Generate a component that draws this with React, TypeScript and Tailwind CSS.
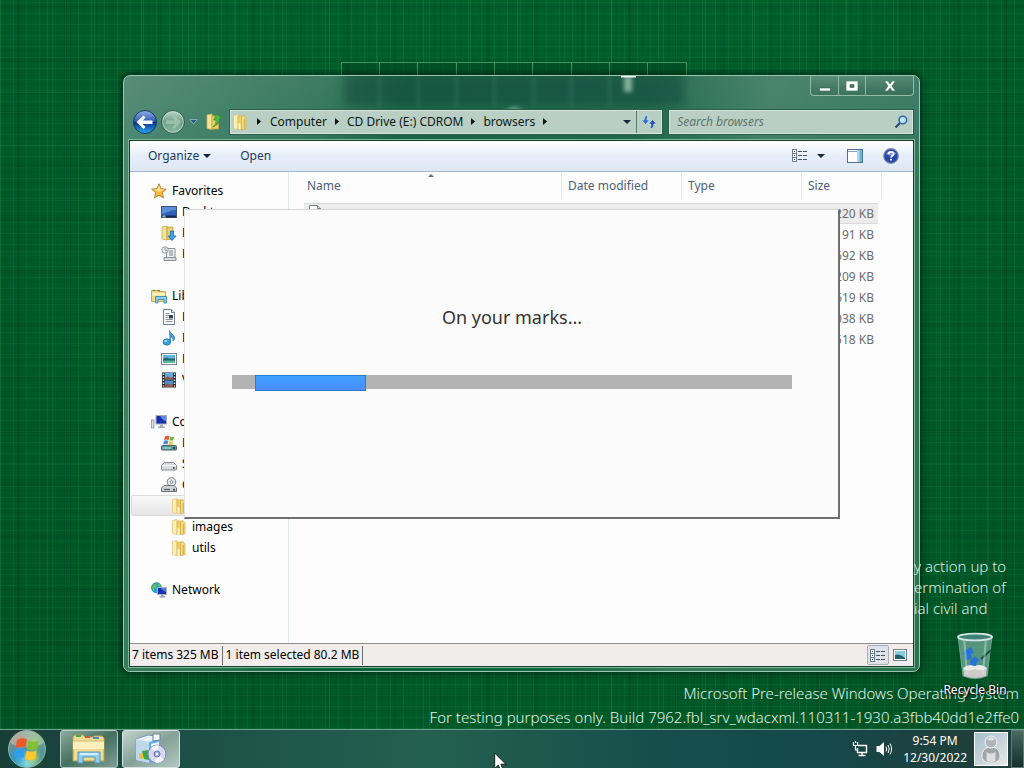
import React from "react";

type P = { children?: React.ReactNode };

const Glyph = ({ children }: P) => (
  <svg viewBox="0 0 16 16" className="h-4 w-4 shrink-0" aria-hidden="true">
    {children}
  </svg>
);

const Star = () => (
  <Glyph>
    <path d="M8 .8l2.1 4.9 5.2.5-3.9 3.5 1.1 5.2L8 12.2l-4.5 2.7 1.1-5.2L.7 6.2l5.2-.5z" fill="#fbb93a" stroke="#b07a35" strokeWidth=".9" />
    <path d="M8 2.6l1.4 3.7 3.7.5L8 8.600 2.800 6.800l3.800-.5z" fill="#ffe49a" />
  </Glyph>
);
const Desktop = () => (
  <Glyph>
    <rect x=".5" y="2.5" width="15" height="11" fill="#2f5fb8" stroke="#3d5378" />
    <path d="M1 3h14v3C9 6 6 9 1 10z" fill="#5e8ed8" />
    <rect x="1" y="11.5" width="14" height="2" fill="#16284c" />
    <rect x="1.5" y="11.5" width="3" height="2" fill="#8fc4c0" />
  </Glyph>
);
const Folder = () => (
  <Glyph>
    <path d="M1.500 1.500L6 .5v15l-4.500-1z" fill="#faeeb0" stroke="#e0c46e" strokeWidth=".7" />
    <path d="M6 2h4.500v13H6z" fill="#ecd06b" stroke="#d8b14a" strokeWidth=".7" />
    <path d="M9.500 2.500L12 1.500l2 3v10l-3 1H9.500z" fill="#f3db80" stroke="#d0a941" strokeWidth=".7" />
    <path d="M6.500 8.500l2 1.500v5h-2z" fill="#fdf6cc" />
    <path d="M12.300 5v9.500" stroke="#c99d35" strokeWidth=".8" />
  </Glyph>
);
const Downloads = () => (
  <Glyph>
    <path d="M1 2l5-1v14l-5-1z" fill="#f6e398" stroke="#c9ab55" strokeWidth=".8" />
    <path d="M6 2h6v12.5H6z" fill="#e6cf77" stroke="#c2a04a" strokeWidth=".8" />
    <path d="M9.500 6h3v5h2.600L11 15.600 7 11h2.500z" fill="#3ea4e0" stroke="#1e6da8" strokeWidth=".8" />
  </Glyph>
);
const Recent = () => (
  <Glyph>
    <path d="M5.500 2.500h8.500v9H5.500z" fill="#eef1f3" stroke="#878e94" />
    <path d="M3 11.500h12v3H3z" fill="#d8dcdf" stroke="#878e94" />
    <circle cx="4" cy="4" r="3.200" fill="#f7f9fa" stroke="#8c9499" />
    <path d="M4 2v2.200h2M8 5h4M8 7h4M8 9h4" stroke="#7c868e" fill="none" />
  </Glyph>
);
const Libraries = () => (
  <Glyph>
    <path d="M.5 2.500h6l1 1h7v10H.5z" fill="#f0da85" stroke="#c8ab58" />
    <path d="M1 5h13v2.500H1z" fill="#fdf3c0" />
    <path d="M1.500 2.500h3" stroke="#52a152" strokeWidth="1.2" />
    <path d="M6 2.500h3" stroke="#c85340" />
    <path d="M4.500 15V8.500h11V15h-2.500v-3.500H7V15z" fill="#8fcdee" stroke="#3b8bbb" strokeWidth=".9" />
  </Glyph>
);
const Doc = () => (
  <Glyph>
    <path d="M2.500.5h8l3 3v12h-11z" fill="#fcfdff" stroke="#6f7d8a" />
    <path d="M10.500.5v3h3" fill="#dce4eb" stroke="#6f7d8a" />
    <path d="M4.500 4.500h4M4.500 6.500h4M4.500 8.500h3M4.500 10.500h7M4.500 12.500h7" stroke="#8796a6" />
    <rect x="8" y="6" width="4" height="3.500" fill="#33475e" />
  </Glyph>
);
const Music = () => (
  <Glyph>
    <path d="M8.500.5c.5 3 5 4 5 7.500 0 1.500-.7 2.500-1.500 3 .5-2.500-1-4-2.700-4.500v6z" fill="#3e9fd8" stroke="#1f6ea4" strokeWidth=".7" />
    <ellipse cx="5.800" cy="12" rx="3.800" ry="3.200" fill="#36a3de" stroke="#1f6ea4" strokeWidth=".7" />
    <ellipse cx="4.800" cy="11" rx="1.600" ry="1" fill="#a8def6" />
  </Glyph>
);
const Picture = () => (
  <Glyph>
    <rect x=".5" y="2.500" width="15" height="11" fill="#fff" stroke="#798692" />
    <rect x="2" y="4" width="12" height="8" fill="#62b4de" />
    <path d="M2 8c4-3 6 1 12-1v5H2z" fill="#206873" />
    <path d="M2 10c4-1 8 0 12-.5V12H2z" fill="#60b4a0" />
  </Glyph>
);
const Film = () => (
  <Glyph>
    <rect x="1" y=".5" width="14" height="15" fill="#252b32" />
    <rect x="4" y="1" width="8" height="6.500" fill="#5badde" />
    <rect x="4" y="8.500" width="8" height="6.500" fill="#4796d0" />
    <path d="M4 6l3-2 2 2 3-1v2.500H4zM4 13l3-2 2 2 3-1v3H4z" fill="#98534a" />
    <path d="M2.500 1.500v13M13.500 1.500v13" stroke="#fff" strokeWidth="1.500" strokeDasharray="1.500 1.500" />
  </Glyph>
);
const Computer = () => (
  <Glyph>
    <rect x=".5" y="6" width="2.500" height="8" fill="#d9dde0" stroke="#7c868d" strokeWidth=".7" />
    <rect x="5" y="1.500" width="10.500" height="8.500" fill="#1a2fb0" stroke="#a4adb8" />
    <path d="M9 2h6v5c-2 0-4-2-6-5z" fill="#6287ea" />
    <path d="M9 10.500h3v2h2v1.500H7v-1.500h2z" fill="#a5adb6" />
  </Glyph>
);
const Disk = () => (
  <Glyph>
    <path d="M3.500 6.500h9l3 3v3.500q0 1-1 1h-13q-1 0-1-1V9.500z" fill="#d9dbdc" stroke="#777c80" strokeWidth=".9" />
    <path d="M1 9.500h14" stroke="#fafafa" />
    <circle cx="12.800" cy="12" r="1" fill="#39424a" />
  </Glyph>
);
const WinDisk = () => (
  <Glyph>
    <rect x=".5" y="10.500" width="15" height="4.500" rx="1" fill="#5c9a9c" stroke="#4b6266" />
    <path d="M4 1.500q2-1.500 4.500-.3L7.600 5Q5.500 4 3.200 5z" fill="#e1593a" />
    <path d="M9.300 1.500q2 1 4 0L12.500 5q-2 1-4 .2z" fill="#73b547" />
    <path d="M3 5.800q2-1 4.300 0L6.500 9.500q-2-1-4.300 0z" fill="#4b87d7" />
    <path d="M8.200 6q2 1 4 0l-.8 3.800q-2 .8-4 0z" fill="#f2c540" />
    <path d="M2 13h8" stroke="#b7e0dc" />
    <circle cx="13" cy="13" r="1" fill="#1c3134" />
  </Glyph>
);
const CdDrive = () => (
  <Glyph>
    <circle cx="10.500" cy="5" r="4.300" fill="#e7e9ea" stroke="#777e83" />
    <circle cx="10.500" cy="5" r="1.400" fill="#fff" stroke="#777e83" strokeWidth=".8" />
    <path d="M3 8.500h10l2.500 2.500v3.500H.5V11z" fill="#cfd2d4" stroke="#6b7174" />
    <path d="M3 12.500h6" stroke="#5e6568" strokeWidth="1.400" />
    <circle cx="13" cy="12.700" r="1" fill="#2e3538" />
  </Glyph>
);
const Network = () => (
  <Glyph>
    <circle cx="5.500" cy="5.800" r="5" fill="#31a3cf" stroke="#2375a5" strokeWidth=".8" />
    <path d="M2 2.500c3-2 4 0 3.500 1.500S3 5.500 3 8 1 7 .8 6zM7 1c2 .5 3 2 3 3.500L7.500 4z" fill="#62bd5b" />
    <rect x="6.500" y="5.500" width="9" height="7" fill="#172fb5" stroke="#aab4c2" />
    <path d="M10 6h5v3.500c-2 0-4-1.500-5-3.500z" fill="#587be0" />
    <path d="M10 13h2.500v1.200h1.500v1.300H8.500v-1.300H10z" fill="#929ba7" />
  </Glyph>
);
const DetailsIcon = () => (
  <svg viewBox="0 0 16 14" className="h-[14px] w-4" aria-hidden="true">
    <g fill="#fff" stroke="#6d7b8d">
      <rect x=".5" y=".5" width="4" height="4" />
      <rect x=".5" y="4.500" width="4" height="4" />
      <rect x=".5" y="8.500" width="4" height="4" />
    </g>
    <path d="M2 2.500h1M2 6.500h1M2 10.500h1M6 2.500h4M11 2.500h4M6 6.500h4M11 6.500h4M6 10.500h4M11 10.500h4" stroke="#44566d" />
  </svg>
);
const Caret = () => (
  <svg viewBox="0 0 8 4" className="h-1 w-2" aria-hidden="true">
    <path d="M0 0h8L4 4z" fill="#16273d" />
  </svg>
);
const Chevron = () => (
  <svg viewBox="0 0 4 7" className="h-[7px] w-1 shrink-0" aria-hidden="true">
    <path d="M0 0v7l4-3.500z" fill="#111" />
  </svg>
);

type Item = { label: string; icon: () => React.ReactElement; depth: number; selected?: boolean };
const groups: Item[][] = [
  [
    { label: "Favorites", icon: Star, depth: 0 },
    { label: "Desktop", icon: Desktop, depth: 1 },
    { label: "Downloads", icon: Downloads, depth: 1 },
    { label: "Recent Places", icon: Recent, depth: 1 },
  ],
  [
    { label: "Libraries", icon: Libraries, depth: 0 },
    { label: "Documents", icon: Doc, depth: 1 },
    { label: "Music", icon: Music, depth: 1 },
    { label: "Pictures", icon: Picture, depth: 1 },
    { label: "Videos", icon: Film, depth: 1 },
  ],
  [
    { label: "Computer", icon: Computer, depth: 0 },
    { label: "Local Disk", icon: WinDisk, depth: 1 },
    { label: "System", icon: Disk, depth: 1 },
    { label: "CD Drive", icon: CdDrive, depth: 1 },
    { label: "browsers", icon: Folder, depth: 2, selected: true },
    { label: "images", icon: Folder, depth: 2 },
    { label: "utils", icon: Folder, depth: 2 },
  ],
  [{ label: "Network", icon: Network, depth: 0 }],
];
const indents = ["pl-[19px] gap-[5px]", "pl-[29px] gap-[5px]", "pl-[39px] gap-[5px]"];
const sizes = ["220 KB", "191 KB", "692 KB", "209 KB", "619 KB", "038 KB", "518 KB"];

function Wallpaper() {
  return (
    <>
      <div className="absolute inset-0 bg-[#005f2b] bg-[repeating-linear-gradient(90deg,rgba(80,190,110,.1)_0_1px,transparent_1px_5px,rgba(0,40,20,.1)_5px_6px,transparent_6px_13px),repeating-linear-gradient(90deg,rgba(100,210,130,.12)_0_1px,transparent_1px_17px,rgba(0,30,15,.1)_17px_20px,transparent_20px_47px),repeating-linear-gradient(0deg,rgba(80,190,110,.08)_0_1px,transparent_1px_7px,rgba(0,40,20,.09)_7px_8px,transparent_8px_11px),repeating-linear-gradient(0deg,rgba(100,210,130,.08)_0_1px,transparent_1px_31px,rgba(0,30,15,.08)_31px_35px,transparent_35px_53px)]" />
      <div className="absolute inset-0 bg-[radial-gradient(ellipse_at_50%_0%,transparent_45%,rgba(0,35,18,.2)_100%)]" />
      <svg className="absolute top-[62px] left-[341px] h-[14px] w-[347px]" viewBox="0 0 347 14" aria-hidden="true">
        <path d="M1 1h344v13H1z" fill="#003d20" opacity=".35" />
        <path d="M.5 0v14M38.500 0v14M76.500 0v14M115.500 0v14M153.500 0v14M191.500 0v14M230.500 0v14M268.500 0v14M306.500 0v14M345.500 0v14M0 .5h346" fill="none" stroke="#3d9560" />
      </svg>
    </>
  );
}

function GlassReflections() {
  return (
    <svg className="pointer-events-none absolute top-0 left-[200px] h-[64px] w-[400px]" viewBox="0 0 400 64" aria-hidden="true">
      <defs>
        <filter id="soft" x="-.3" y="-.3" width="1.6" height="1.6"><feGaussianBlur stdDeviation="4" /></filter>
        <filter id="faint" x="-1" y="-.5" width="3" height="2"><feGaussianBlur stdDeviation="2" /></filter>
      </defs>
      <path d="M20 -4h340v34H20z" fill="#0b4638" opacity=".5" filter="url(#soft)" />
      <g filter="url(#faint)" stroke="#5f9f85" strokeWidth="2" opacity=".35">
        <path d="M55.500 0v30M94.500 0v30M132.500 0v30M170.500 0v30M209.500 0v30M247.500 0v30M285.500 0v30" />
      </g>
      <path d="M300 0h8v16h-8z" fill="#cfe8da" opacity=".6" filter="url(#faint)" />
      <circle cx="190" cy="41" r="10" fill="#b3cfc2" opacity=".6" filter="url(#faint)" />
      <path d="M297 0h15" stroke="#f1fbf5" strokeWidth="3" />
    </svg>
  );
}

function TitleArea() {
  return (
    <header className="relative flex flex-col">
      <div className="flex justify-end">
        <div className="flex h-[20px] divide-x divide-[#8fbca5] rounded-b-[4px] border border-t-0 border-[#8fbca5] bg-gradient-to-b from-white/10 to-black/10">
          <button aria-label="Minimize" className="flex w-[28px] items-center justify-center">
            <svg viewBox="0 0 12 12" className="h-3 w-3"><path d="M.5 8h11v3H.5z" fill="#fff" stroke="#355e4c" strokeWidth=".6" /></svg>
          </button>
          <button aria-label="Maximize" className="flex w-[27px] items-center justify-center">
            <svg viewBox="0 0 12 10" className="h-[10px] w-3"><path d="M0 0h12v10H0zM4 3.500v3h4v-3z" fill="#fff" fillRule="evenodd" stroke="#355e4c" strokeWidth=".6" /></svg>
          </button>
          <button aria-label="Close" className="flex w-[47px] items-center justify-center">
            <svg viewBox="0 0 12 10" className="h-[10px] w-3"><path d="M.5 0H4l2 3 2-3h3.500L8 5l3.500 5H8L6 7l-2 3H.5L4 5z" fill="#fff" stroke="#355e4c" strokeWidth=".6" /></svg>
          </button>
        </div>
      </div>
      <div className="mt-[13px] mb-[6px] flex h-[25px] items-center pr-px pl-[3px]">
        <button aria-label="Back" className="shrink-0">
          <svg viewBox="0 0 26 26" className="h-[26px] w-[26px]">
            <defs>
              <linearGradient id="bk" x2="0" y2="1"><stop stopColor="#8eb1e3" /><stop offset=".48" stopColor="#2d58b4" /><stop offset=".5" stopColor="#0a2b8a" /><stop offset="1" stopColor="#28aef0" /></linearGradient>
              <linearGradient id="fw" x2="0" y2="1"><stop stopColor="#bfd8cc" /><stop offset=".5" stopColor="#709e8a" /><stop offset="1" stopColor="#8fbda6" /></linearGradient>
            </defs>
            <circle cx="13" cy="13" r="11.500" fill="url(#bk)" stroke="#123c55" />
            <path d="M4.500 13L11.500 6.500l2 2-2.700 3H20.500v3.500H10.800l2.700 3-2 2z" fill="#fff" />
          </svg>
        </button>
        <button aria-label="Forward" className="ml-[2px] shrink-0">
          <svg viewBox="0 0 26 26" className="h-[26px] w-[26px]">
            <circle cx="13" cy="13" r="11.500" fill="url(#fw)" stroke="#2a5e4b" />
            <circle cx="13" cy="13" r="10.300" fill="none" stroke="#c2ded0" opacity=".6" />
            <path d="M21 13L14.500 6.500l-2 2 2.700 3H6v3.500h9.200l-2.700 3 2 2z" fill="#a4c8b6" opacity=".8" />
          </svg>
        </button>
        <button aria-label="Recent pages" className="ml-[3px] shrink-0">
          <svg viewBox="0 0 9 6" className="h-[6px] w-[9px]"><path d="M.8.5h7.400L4.500 5z" fill="#235a84" stroke="#8ec3c2" strokeWidth=".8" /></svg>
        </button>
        <button aria-label="Up" className="mr-[7px] ml-[7px] shrink-0">
          <svg viewBox="0 0 18 18" className="h-[18px] w-[18px]">
            <path d="M2 2l5-1v15.500l-5-1z" fill="#f6e398" stroke="#d5b355" strokeWidth=".8" />
            <path d="M7 3h6.500v13H7z" fill="#ecd06b" stroke="#caa23c" strokeWidth=".8" />
            <path d="M8 14q4-3 3-7H8.500L12 1l5 4.500-2.700.5q.5 5-6.300 8z" fill="#4dbb3c" stroke="#2a8a28" strokeWidth=".7" />
          </svg>
        </button>
        <div className="flex h-[24px] min-w-0 flex-[435] items-center border border-[#d5e6dd] bg-[#b9cfc5] pl-[1px] text-[12px] text-[#0d1a15] outline outline-[#2a5e4b]">
          <Folder />
          <nav aria-label="Address" className="flex items-center whitespace-nowrap">
            <span className="mx-[9px]"><Chevron /></span>
            <a href="#computer">Computer</a>
            <span className="mx-[8px]"><Chevron /></span>
            <a href="#cd">CD Drive (E:) CDROM</a>
            <span className="mx-[8px]"><Chevron /></span>
            <a href="#browsers">browsers</a>
            <span className="mx-[8px]"><Chevron /></span>
          </nav>
          <button aria-label="Previous locations" className="mr-[5px] ml-auto"><Caret /></button>
          <button aria-label="Refresh" className="flex h-full w-[25px] items-center justify-center border-l border-[#55796a]">
            <svg viewBox="0 0 16 14" className="h-[14px] w-4">
              <path d="M5.500.5Q3 1.500 3 5H.5l4 4.500 4-4.500H6q0-2.500 1-4z" fill="#3670c3" stroke="#dcebf4" strokeWidth=".6" />
              <path d="M10.500 13.500q2.500-1 2.500-4.500h2.500l-4-4.500L7.500 9H10q0 2.500-1 4z" fill="#2c52ae" stroke="#dcebf4" strokeWidth=".6" />
            </svg>
          </button>
        </div>
        <label className="ml-[7px] flex h-[24px] min-w-0 flex-[241] items-center border border-[#d5e6dd] bg-[#b9cfc5] pr-[4px] outline outline-[#2a5e4b]">
          <input aria-label="Search browsers" placeholder="Search browsers" className="w-full min-w-0 bg-transparent pl-[7px] text-[12px] italic outline-none placeholder:text-[#60766c]" />
          <svg viewBox="0 0 14 14" className="h-[14px] w-[14px] shrink-0" aria-hidden="true">
            <path d="M1.500 12.500L6 8" stroke="#2a4a66" strokeWidth="2.200" />
            <circle cx="8.800" cy="5" r="3.800" fill="#bfe3ef" stroke="#3268ad" strokeWidth="1.600" />
          </svg>
        </label>
      </div>
    </header>
  );
}

function Explorer() {
  return (
    <section aria-label="browsers" className="absolute top-[75px] left-[123px] flex h-[597px] w-[797px] flex-col rounded-[7px] border border-[#9ac9ae] bg-[#0d6238] bg-[linear-gradient(100deg,rgba(255,255,255,.24)_0px,rgba(255,255,255,.12)_200px,transparent_280px,rgba(255,255,255,.03)_520px,rgba(255,255,255,.18)_640px,rgba(255,255,255,.12)_850px),linear-gradient(180deg,#24694e_0px,#19654a_50px,#0c6138_130px)] px-[5px] pb-[4px] shadow-[0_0_7px_2px_rgba(0,25,12,.65)]">
      <GlassReflections />
      <TitleArea />
      <div className="relative flex min-h-0 flex-1 flex-col border border-[#12402a] bg-[#fdfdfd] outline outline-[#7fb897]">
        <div className="flex h-[31px] shrink-0 items-center border-b border-[#a9b9cd] bg-gradient-to-b from-white from-0% via-[#e6eefa] via-50% to-[#dde7f4] pr-[14px] pl-[18px] text-[12px] text-[#1e395b]">
          <button className="flex items-center gap-[4px]">Organize <Caret /></button>
          <button className="ml-[29px]">Open</button>
          <button aria-label="Change view" className="ml-auto"><DetailsIcon /></button>
          <button aria-label="More view options" className="ml-[9px]"><Caret /></button>
          <button aria-label="Preview pane" className="ml-[22px]">
            <svg viewBox="0 0 16 14" className="h-[14px] w-4"><rect x=".5" y=".5" width="15" height="13" fill="#fff" stroke="#51708f" /><path d="M1 2.500h9" stroke="#8ba5bd" /><rect x="10" y="1" width="5" height="12" fill="#67b5dc" /><path d="M10 1h2.500v12H10z" fill="#a7d9f0" /></svg>
          </button>
          <button aria-label="Help" className="ml-[20px]">
            <svg viewBox="0 0 16 16" className="h-4 w-4"><circle cx="8" cy="8" r="7.300" fill="#2946a5" stroke="#7d8bb1" strokeWidth="1.200" /><path d="M3 6a5.300 4.500 0 0 1 10 0q-5 3-10 0z" fill="#7f98dc" /><path d="M5.600 6.200q0-2.400 2.500-2.400t2.400 2.100q0 1.200-1.200 1.900T8 9.500" fill="none" stroke="#fff" strokeWidth="1.700" /><rect x="7.100" y="10.700" width="1.800" height="1.800" fill="#fff" /></svg>
          </button>
        </div>
        <div className="flex min-h-0 flex-1">
          <nav aria-label="Folders" className="flex w-[159px] shrink-0 flex-col gap-[21px] border-r border-[#e4e9f0] pt-[8px] pr-px pl-px text-[12px] text-black">
            {groups.map((g) => (
              <ul key={g[0].label}>
                {g.map((it) => (
                  <li key={it.label} className={`flex h-[21px] items-center rounded-[2px] border whitespace-nowrap ${indents[it.depth]} ${it.selected ? "border-[#dcdcdc] bg-gradient-to-b from-[#f9f9f9] to-[#e5e5e5]" : "border-transparent"}`}>
                    <it.icon />
                    <a href={`#${it.label}`}>{it.label}</a>
                  </li>
                ))}
              </ul>
            ))}
          </nav>
          <div className="min-w-0 flex-1 pl-[15px]">
            <table className="w-[578px] table-fixed border-separate border-spacing-0 text-left text-[12px]">
              <colgroup>
                <col className="w-[258px]" /><col className="w-[120px]" /><col className="w-[120px]" /><col className="w-[76px]" /><col className="w-[4px]" />
              </colgroup>
              <thead className="text-[#4c607a]">
                <tr className="h-[27px]">
                  <th aria-sort="ascending" className="relative border-r border-[#e3e8ee] pl-[3px] font-normal">
                    Name
                    <svg viewBox="0 0 6 3" className="absolute top-[2px] left-[124px] h-[3px] w-[6px]" aria-hidden="true"><path d="M3 0l3 3H0z" fill="#5d7183" /></svg>
                  </th>
                  <th className="border-r border-[#e3e8ee] pl-[6px] font-normal">Date modified</th>
                  <th className="border-r border-[#e3e8ee] pl-[6px] font-normal">Type</th>
                  <th className="pl-[6px] font-normal">Size</th>
                  <td className="border-r border-[#e3e8ee]" />
                </tr>
                <tr className="h-[4px]"><td colSpan={5} className="p-0" /></tr>
              </thead>
              <tbody className="text-[#6d6d6d]">
                {sizes.map((s, i) => (
                  <tr key={s} className={i === 0 ? "h-[21px] [&>td:not(:last-child)]:border-y [&>td:not(:last-child)]:border-[#d9d9d9] [&>td:not(:last-child)]:bg-[#ececec]" : "h-[21px]"}>
                    <td className="p-0 pl-[3px]">{i === 0 && <div className="h-[17px]"><Doc /></div>}</td>
                    <td className="p-0" />
                    <td className="p-0" />
                    <td className="p-0 pr-[4px] text-right">{s}</td>
                    <td className="p-0" />
                  </tr>
                ))}
              </tbody>
            </table>
          </div>
        </div>
        <footer className="flex h-[23px] shrink-0 items-center border-t border-[#8e8e8e] bg-[#f1eded] pr-[4px] pl-[2px] text-[12px] text-black">
          <span className="flex h-[19px] items-center gap-[3px] border-r border-[#707070] pr-[3px]"><span>7 items</span><span>325 MB</span></span>
          <span className="flex h-[19px] items-center gap-[3px] border-r border-[#707070] pr-[3px] pl-[3px]"><span>1 item selected</span><span>80.2 MB</span></span>
          <button aria-label="Details view" className="ml-auto flex h-[20px] w-[22px] items-center justify-center rounded-[2px] border border-[#a9aeb5] bg-[#dfe2e8] pt-px"><DetailsIcon /></button>
          <button aria-label="Picture view" className="ml-[4px] flex h-[20px] w-[16px] items-center">
            <svg viewBox="0 0 14 12" className="h-3 w-[14px]"><rect x=".5" y=".5" width="13" height="11" fill="#fff" stroke="#71808d" /><rect x="2" y="2" width="10" height="8" fill="#8ccae3" /><path d="M2 6q5-2 10 3v1H2z" fill="#235d6a" /></svg>
          </button>
        </footer>
      </div>
    </section>
  );
}

function Setup() {
  return (
    <section role="dialog" aria-label="Setup" className="absolute top-[209px] left-[184px] flex h-[310px] w-[656px] flex-col items-center border-t border-r-2 border-b-2 border-l border-t-[#d7d7d7] border-r-[#707070] border-b-[#707070] border-l-[#e3e3e3] bg-[#fbfbfb] pr-[46px] pl-[47px]">
      <p className="mt-[92px] text-[18px] leading-[30px] text-[#333]">On your marks...</p>
      <div role="progressbar" aria-label="Setup progress" className="mt-[43px] h-[14px] w-full bg-[#b3b3b3] pl-[23px]">
        <div className="h-[16px] w-[111px] border border-[#3178cf] bg-gradient-to-b from-[#3fa0ff] to-[#4b8dff]" />
      </div>
    </section>
  );
}

function RecycleBin() {
  return (
    <a href="#recycle" className="absolute right-[9px] bottom-[31px] flex w-[80px] flex-col items-center text-[12px] leading-[16px] whitespace-nowrap text-white [text-shadow:1px_1px_2px_#000,0_0_3px_#000]">
      <svg viewBox="0 0 40 48" className="mb-[2px] h-[48px] w-[40px]" aria-hidden="true">
        <path d="M3 4l5 40q12 5 24 0l5-40z" fill="#8fc0b8" opacity=".6" stroke="#b7d8d2" />
        <path d="M8 36l1 8q11 4 22 0l1-8q-10-5-24 0z" fill="#cfcbc8" />
        <path d="M8 36q6-5 12-2 6-3 12 2-5 4-12 1-7 4-12-1z" fill="#ebe9e8" />
        <path d="M9 19l7-4 3 6-3 1 1 5-6 1-1-5-2 0zM15 29l5-5 5 5-3 1-1 4-6-1z" fill="#2873d4" />
        <path d="M36 18L26 27" stroke="#174f43" strokeWidth="2" />
        <path d="M9 6l3 36M31 6l-3 36" stroke="#e0f2ef" opacity=".4" strokeWidth="2" />
        <ellipse cx="20" cy="5" rx="17" ry="3.300" fill="#3d8273" stroke="#d5e5e3" strokeWidth="1.800" />
      </svg>
      Recycle Bin
    </a>
  );
}

function Taskbar() {
  return (
    <footer className="relative flex h-[39px] shrink-0 items-center border-t border-[#6da18b] bg-[linear-gradient(90deg,#173e37,#1d5148_20%,#24604f_42%,#164d4b_65%,#15494c_80%,#1e403c_92%)] text-white">
      <button aria-label="Start" className="ml-[6px] shrink-0">
        <svg viewBox="0 0 42 38" className="h-[38px] w-[42px]">
          <defs>
            <radialGradient id="orb" cx=".5" cy=".9" r=".85"><stop stopColor="#80dee5" /><stop offset=".45" stopColor="#3590a7" /><stop offset="1" stopColor="#809a91" /></radialGradient>
            <filter id="glow" x="-.3" y="-.3" width="1.6" height="1.6"><feGaussianBlur stdDeviation="3" /></filter>
          </defs>
          <circle cx="21" cy="19" r="18.500" fill="url(#orb)" stroke="#a5c4bb" strokeWidth=".8" />
          <g filter="url(#glow)" opacity=".75">
            <circle cx="14" cy="12" r="6" fill="#f0602c" /><circle cx="28" cy="12" r="6" fill="#82cf35" />
            <circle cx="13" cy="26" r="6" fill="#2ea6f4" /><circle cx="27" cy="27" r="6" fill="#fbd92e" />
          </g>
          <path d="M4 13a18 18 0 0 1 34 0q-17 9-34 0z" fill="#fff" opacity=".28" />
          <path d="M11 10q5-3 10-.5L19.500 18q-5-2.500-10 0z" fill="#e85a2a" />
          <path d="M22.500 10.500q5 2.500 10 0L31 19q-5 2-10 0z" fill="#82bf35" />
          <path d="M9 19.500q5-2.500 10 0L17.500 28q-5-2.500-10 0z" fill="#329ee9" />
          <path d="M20.700 20.500q5 2.500 10 0L29 29q-5 2-10 0z" fill="#fbc92e" />
        </svg>
      </button>
      <button aria-label="File Explorer" className="ml-[12px] flex h-[38px] w-[58px] shrink-0 items-center justify-center rounded-[3px] border border-[#b5ccc4] bg-gradient-to-br from-[#8cab9e] via-[#45705f] to-[#7f9f93]">
        <svg viewBox="0 0 36 32" className="h-8 w-9">
          <path d="M2 4l2-2h8l2 2h8l1-1h8l2 2v23H2z" fill="#f0dc91" stroke="#b99c52" />
          <path d="M5 3h5" stroke="#52a852" strokeWidth="2" /><path d="M14 4h5" stroke="#cf5646" strokeWidth="2" /><path d="M22 5h6" stroke="#498dcc" strokeWidth="2" />
          <path d="M2 8h31v8H2z" fill="#fbf0bb" />
          <path d="M2 8h31" stroke="#d2b86c" />
          <path d="M7 30V19h22v11h-5v-6H12v6z" fill="#91ccea" stroke="#4e9cc5" />
          <path d="M9 20h18v2H9z" fill="#d2effb" />
        </svg>
      </button>
      <button aria-label="Setup" className="ml-[4px] flex h-[38px] w-[58px] shrink-0 items-center justify-center rounded-[3px] border border-[#d7e3df] bg-gradient-to-br from-[#c3d3cd] via-[#85a297] to-[#b4c6c0]">
        <svg viewBox="0 0 32 32" className="h-8 w-8">
          <path d="M1 6l12-4 12 2v23l-11 3-13-3z" fill="#e8f2fa" stroke="#7f9cba" />
          <path d="M1 6l13 3v21L1 27z" fill="#bfd9ec" />
          <path d="M14 9l11-3v21l-11 3z" fill="#5fb2e8" />
          <path d="M16 11l8-2v4l-8 2z" fill="#fff" />
          <path d="M7 18l7-1v10l-5-1z" fill="#3da548" /><path d="M4 20l4 1v5l-4-1z" fill="#e9c13e" />
          <path d="M18 1h7v6l-7 1z" fill="#f4f7fb" stroke="#6b7fa4" />
          <circle cx="22" cy="21" r="9" fill="#d4d8f3" stroke="#7e87b3" />
          <path d="M22 21l-6-6.500A9 9 0 0 1 24 12.200zM22 21l7 5.500A9 9 0 0 1 20 29.800z" fill="#fff" opacity=".75" />
          <circle cx="22" cy="21" r="3" fill="#9fa9d8" stroke="#6d78ad" /><circle cx="22" cy="21" r="1.200" fill="#fff" />
        </svg>
      </button>
      <div className="ml-auto flex h-full items-center">
        <button aria-label="Network status">
          <svg viewBox="0 0 16 16" className="h-4 w-4"><path d="M6 4.500h8.500v7H5.500V7" fill="none" stroke="#fff" strokeWidth="1.400" /><path d="M6.500 14.500h7M10 11.500v3" stroke="#fff" strokeWidth="1.400" /><path d="M1.500 1v3.500h4V1M3.500 0v2M3.500 4.500v4.500h2" fill="none" stroke="#fff" strokeWidth="1.200" /></svg>
        </button>
        <button aria-label="Volume" className="ml-[8px]">
          <svg viewBox="0 0 16 16" className="h-4 w-4"><path d="M.5 5h3L8 1v14L3.500 11h-3z" fill="#fff" /><path d="M10 5.500q1.500 2.500 0 5M12 4q2.600 4 0 8M14 2.500q3.200 5.500 0 11" fill="none" stroke="#fff" strokeWidth="1" /></svg>
        </button>
        <time className="ml-[11px] flex flex-col items-center text-[12px] leading-[17px]"><span>9:54 PM</span><span>12/30/2022</span></time>
        <button aria-label="User" className="ml-[7px] flex h-[34px] w-[34px] items-end justify-center border border-white bg-gradient-to-br from-[#a5bfcb] to-[#e6e7e8]">
          <svg viewBox="0 0 32 32" className="h-8 w-8">
            <path d="M16 14c6 0 9 4 9 9 0 4-3 7-9 7s-9-3-9-7c0-5 3-9 9-9z" fill="#9fa5a9" stroke="#eef0f1" />
            <circle cx="16" cy="9" r="6" fill="#b0b5b9" stroke="#f2f3f4" />
            <path d="M12 6q4-4 8 0-4 3-8 0z" fill="#dfe2e4" />
            <path d="M11.500 19q4.500 3 9 0v9q-4.500 2-9 0z" fill="#dcdee0" />
          </svg>
        </button>
        <button aria-label="Show desktop" className="ml-[3px] h-[38px] w-[13px] border border-[#5d7c75] bg-gradient-to-b from-[#4a6962] to-[#15302b]" />
      </div>
    </footer>
  );
}

export default function App() {
  return (
    <div className="relative flex min-h-screen flex-col overflow-hidden font-['Noto_Sans','Open_Sans',sans-serif]">
      <main className="relative flex flex-1 flex-col justify-end">
        <Wallpaper />
        <div className="relative pr-[5px] text-right text-[15px] leading-[24px] font-light text-[#e0f3e7]">
          <p>Microsoft Pre-release Windows Operating System</p>
          <p>For testing purposes only. Build 7962.fbl_srv_wdacxml.110311-1930.a3fbb40dd1e2ffe0</p>
        </div>
        <RecycleBin />
        <Explorer />
        <p className="absolute right-0 bottom-[110px] w-[110px] text-[15px] leading-[21px] font-light whitespace-nowrap text-[#dcf0e3]">
          y action up to<br />ermination of<br />ial civil and
        </p>
        <Setup />
      </main>
      <Taskbar />
      <svg className="pointer-events-none absolute bottom-[-4px] left-[494px] h-[20px] w-[13px]" viewBox="0 0 13 20" aria-hidden="true">
        <path d="M.7 1v15.500l3.600-3.400 2.600 6 2.500-1.100-2.600-5.800h5z" fill="#fff" stroke="#111" strokeWidth=".9" />
      </svg>
    </div>
  );
}
